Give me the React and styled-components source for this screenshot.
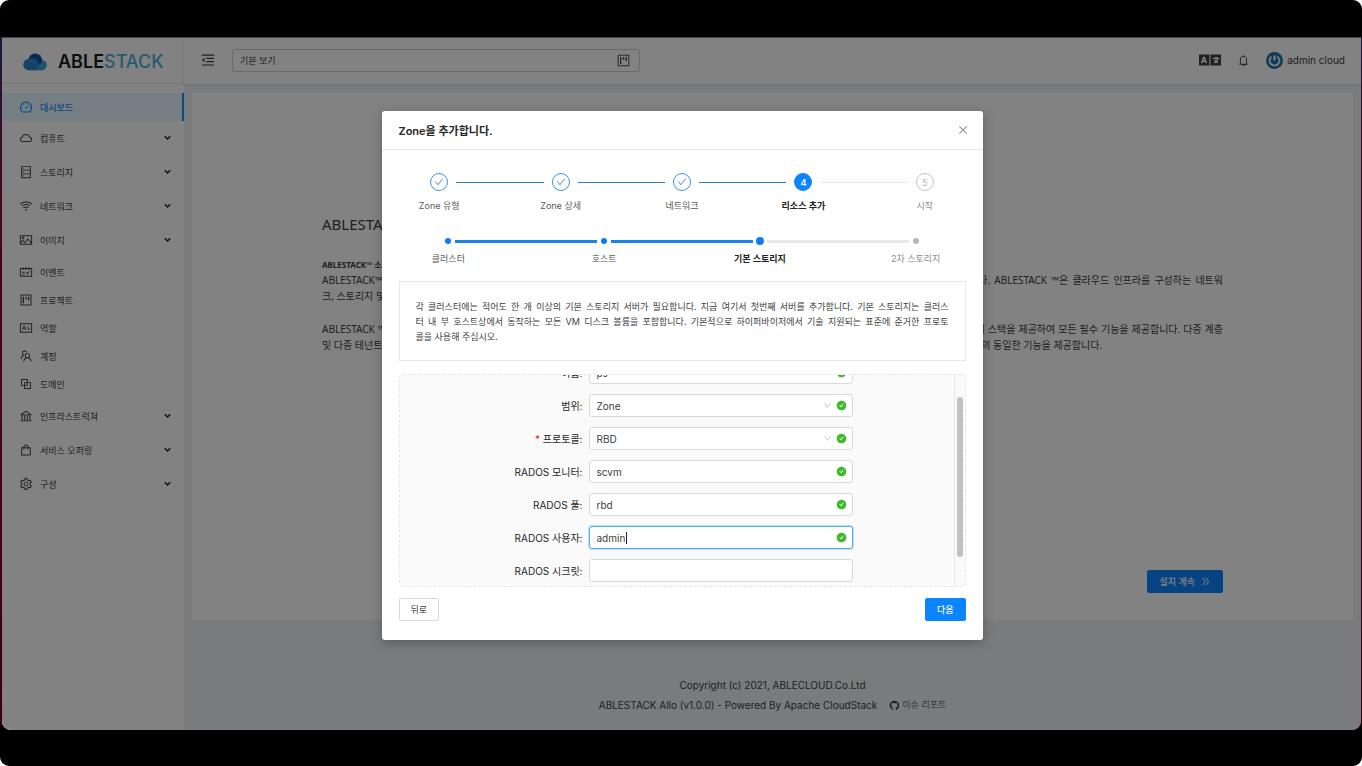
import React, { useLayoutEffect, useRef, useState } from 'react';
import styled, { createGlobalStyle, css } from 'styled-components';
import {
  AiOutlineDashboard, AiOutlineCloud, AiOutlineDatabase, AiOutlineWifi, AiOutlinePicture,
  AiOutlineSchedule, AiOutlineProject, AiOutlineIdcard, AiOutlineTeam, AiOutlineBlock,
  AiOutlineBank, AiOutlineShopping, AiOutlineSetting, AiOutlineMenuFold, AiOutlineBell,
  AiOutlineGithub, AiOutlineDoubleRight, AiFillCheckCircle, AiOutlineCheck, AiOutlineClose,
  AiOutlineDown,
} from 'react-icons/ai';
import { FaLanguage } from 'react-icons/fa';

const GlobalStyle = createGlobalStyle`
  * { box-sizing: border-box; }
  body { margin: 0; background: #fff; }
  body, button, input, select {
    font-family: Inter, "Noto Sans CJK KR", sans-serif;
    font-size: 10px;
    color: #404040;
  }
  ul, ol, p, h1, h2, h3 { margin: 0; padding: 0; list-style: none; }
  a { color: inherit; text-decoration: none; }
  svg { display: block; flex: none; }
`;

const Screen = styled.div`
  min-height: 100vh;
  display: flex;
  flex-direction: column;
  padding: 37px 0 36px;
  background: #000;
  border-radius: 9px;
`;

const Desktop = styled.div`
  flex: 1;
  display: flex;
  padding: 0 1px 0 2px;
  background: linear-gradient(#1b1740, #3a0a28 15%, #4a0018 40%, #3a0018);
  border-radius: 0 0 9px 9px;
`;

const Window = styled.div`
  position: relative;
  flex: 1;
  min-width: 0;
  display: flex;
  background: #f0f2f5;
  border-top: 1px solid #444;
  border-radius: 0 0 9px 9px;
  overflow: hidden;
`;

const Sidebar = styled.aside`
  flex: none;
  width: 182px;
  background: #fff;
`;

const Brand = styled.a`
  display: flex;
  align-items: center;
  gap: 11px;
  height: 46px;
  padding: 2px 0 0 21px;
  border-bottom: 1px solid #e4e6e9;
`;

const BrandName = styled.span`
  font-size: 18px;
  line-height: 20px;
  font-weight: 600;
  color: #1c1a1a;
`;

const BrandAccent = styled.span`
  font-weight: 500;
  color: #4ab2d8;
`;

const Menu = styled.nav`
  display: flex;
  flex-direction: column;
  gap: 1px;
  padding-top: 9px;
`;

const MenuLink = styled.a`
  display: flex;
  align-items: center;
  gap: 7px;
  height: ${(p) => (p.$parent ? 34 : 28)}px;
  padding: 0 13px 0 17px;
  font-size: 9px;
  color: #404040;
  ${(p) => p.$active && css`
    background: #e6f7ff;
    color: #1890ff;
    font-weight: 500;
    border-right: 2px solid #1890ff;
  `}
`;

const MenuText = styled.span`
  flex: 1;
`;

const Main = styled.div`
  flex: 1;
  min-width: 0;
  display: flex;
  flex-direction: column;
`;

const Header = styled.header`
  display: flex;
  align-items: center;
  height: 46px;
  padding: 0 16px 2px;
  background: #fff;
  box-shadow: 0 1px 3px rgba(0, 21, 41, 0.12);
`;

const IconButton = styled.button`
  display: flex;
  padding: 0;
  border: 0;
  background: none;
  color: ${(p) => p.$tone || '#404040'};
`;

const ViewPicker = styled.label`
  display: flex;
  align-items: center;
  width: 408px;
  height: 23px;
  margin-left: 16px;
  padding: 0 8px 0 7px;
  border: 1px solid #d0d0d0;
  border-radius: 3px;
`;

const ViewSelect = styled.select`
  flex: 1;
  appearance: none;
  padding: 0;
  border: 0;
  background: none;
  font-size: 9px;
  outline: 0;
`;

const HeaderTools = styled.div`
  display: flex;
  align-items: center;
  gap: 16px;
  margin-left: auto;
`;

const User = styled.a`
  display: flex;
  align-items: center;
  gap: 4px;
`;

const Card = styled.section`
  display: flex;
  flex-direction: column;
  min-height: calc(100vh - 239px);
  margin: 9px 8px 0;
  padding: 119px 24px 27px;
  background: #fff;
`;

const Intro = styled.div`
  flex: 1;
  display: flex;
  flex-direction: column;
  width: 100%;
  max-width: 901px;
  margin: 0 auto;
  font-family: "Noto Sans", "Noto Sans CJK KR", sans-serif;
`;

const IntroTitle = styled.h1`
  margin-bottom: 22px;
  font-size: 15px;
  line-height: 24px;
  font-weight: 400;
`;

const IntroLead = styled.h2`
  font-size: 8px;
  line-height: 14px;
  font-weight: 700;
`;

const Paragraph = styled.p`
  line-height: 16px;
  & + & { margin-top: 17px; }
`;

const Line = styled.span`
  display: block;
  white-space: nowrap;
  text-align: justify;
  text-align-last: ${(p) => (p.$last ? 'left' : 'justify')};
`;

const Button = styled.button`
  display: flex;
  align-items: center;
  justify-content: center;
  gap: 5px;
  height: 23px;
  padding: 0 11px;
  border: 1px solid ${(p) => (p.$primary ? '#0a84ff' : '#d9d9d9')};
  border-radius: 2px;
  background: ${(p) => (p.$primary ? '#0a84ff' : '#fff')};
  color: ${(p) => (p.$primary ? '#fff' : '#404040')};
  font-size: 9px;
  font-weight: ${(p) => (p.$primary ? 500 : 400)};
`;

const IntroAction = styled.div`
  display: flex;
  justify-content: flex-end;
  margin-top: auto;
`;

const Footer = styled.footer`
  display: flex;
  flex-direction: column;
  align-items: center;
  padding: 55px 0 14px;
  line-height: 20px;
`;

const FooterRow = styled.div`
  display: flex;
  align-items: center;
  gap: 12px;
`;

const IssueLink = styled.a`
  display: flex;
  align-items: center;
  gap: 2px;
  font-size: 9px;
  color: #6b6b6b;
`;

const Overlay = styled.div`
  position: absolute;
  inset: 0;
  display: flex;
  justify-content: center;
  align-items: flex-start;
  padding: 73px 0 0 1px;
  background: rgba(0, 0, 0, 0.49);
`;

const Modal = styled.section`
  width: 100%;
  max-width: 601px;
  background: #fff;
  border-radius: 3px;
  box-shadow: 0 3px 12px rgba(0, 0, 0, 0.25);
`;

const ModalHeader = styled.header`
  display: flex;
  align-items: center;
  justify-content: space-between;
  height: 39px;
  padding: 0 14px 0 17px;
  border-bottom: 1px solid #e8e8e8;
`;

const ModalTitle = styled.h2`
  font-size: 11px;
  font-weight: 600;
  color: #262626;
`;

const ModalBody = styled.div`
  padding: 23px 17px 19px;
`;

const Steps = styled.ol`
  display: flex;
  margin: 0 -20px;
`;

const SubSteps = styled(Steps)`
  margin: 24px -28px 15px;
`;

const Step = styled.li`
  flex: 1;
  display: flex;
  flex-direction: column;
  align-items: center;
`;

const StepTrack = styled.div`
  align-self: stretch;
  display: flex;
  align-items: center;
  gap: ${(p) => (p.$dots ? 3 : 8)}px;
  height: ${(p) => (p.$dots ? 8 : 18)}px;
`;

const lineColor = { done: '#2b7fd0', todo: '#e8e8e8', none: 'transparent' };
const subLineColor = { done: '#1a83e8', todo: '#e8e8e8', none: 'transparent' };

const HalfLine = styled.span`
  flex: 1;
  height: ${(p) => (p.$dots ? 3 : 1)}px;
  background: ${(p) => (p.$dots ? subLineColor : lineColor)[p.$state]};
`;

const StepCircle = styled.span`
  display: flex;
  align-items: center;
  justify-content: center;
  width: 18px;
  height: 18px;
  border: 1px solid #3d92dc;
  border-radius: 50%;
  color: #3d92dc;
  font-size: 9px;
  ${(p) => p.$state === 'current' && css`
    background: #0a84ff;
    border-color: #0a84ff;
    color: #fff;
    font-weight: 600;
  `}
  ${(p) => p.$state === 'todo' && css`
    border-color: #c4c4c4;
    color: #b8b8b8;
  `}
`;

const DotSlot = styled.span`
  display: flex;
  justify-content: center;
  width: 8px;
`;

const Dot = styled.span`
  width: ${(p) => (p.$state === 'current' ? 8 : 6)}px;
  height: ${(p) => (p.$state === 'current' ? 8 : 6)}px;
  border-radius: 50%;
  background: ${(p) => (p.$state === 'todo' ? '#b8b8b8' : '#0a7df2')};
`;

const StepLabel = styled.span`
  margin-top: ${(p) => (p.$dots ? 6 : 7)}px;
  font-size: 9px;
  line-height: 15px;
  font-weight: ${(p) => (p.$state === 'current' ? 600 : 400)};
  color: ${(p) => ({ current: '#222', done: '#595959', todo: '#8c8c8c' })[p.$state]};
`;

const Notice = styled.p`
  padding: 17px 16px 16px;
  border: 1px solid #e8e8e8;
  font-size: 9px;
  line-height: 15px;
`;

const FormPanel = styled.div`
  display: flex;
  height: 213px;
  margin: 13px 0 11px;
  border: 1px dashed #e8e8e8;
  border-radius: 4px;
  background: #fafafa;
  overflow: hidden;
`;

const FormScroller = styled.form`
  flex: 1;
  display: flex;
  flex-direction: column;
  gap: 10px;
  padding: 16px 0 46px;
  overflow-y: auto;
  scrollbar-width: none;
`;

const ScrollTrack = styled.div`
  width: 11px;
  border-left: 1px solid #e8e8e8;
  display: flex;
  justify-content: center;
`;

const ScrollThumb = styled.div`
  width: 6px;
  height: 160px;
  border-radius: 3px;
  background: #c1c1c1;
`;

const Field = styled.div`
  flex: none;
  display: grid;
  grid-template-columns: 183px 264px;
  column-gap: 6px;
  align-items: center;
`;

const FieldLabel = styled.label`
  text-align: right;
  color: #262626;
  white-space: nowrap;
`;

const Required = styled.span`
  color: #f5222d;
`;

const Control = styled.div`
  position: relative;
  display: flex;
  align-items: center;
  gap: 4px;
  height: 23px;
  padding: 0 5px 0 7px;
  border: 1px solid ${(p) => (p.$focused ? '#5aa9f5' : '#d9d9d9')};
  border-radius: 3px;
  background: #fff;
  box-shadow: ${(p) => (p.$focused ? '0 0 0 1px rgba(24, 144, 255, 0.25)' : 'none')};
`;

const controlStyle = css`
  flex: 1;
  min-width: 0;
  height: 100%;
  padding: 0;
  border: 0;
  outline: 0;
  background: none;
`;

const TextInput = styled.input`${controlStyle}`;
const SelectInput = styled.select`${controlStyle} appearance: none;`;

const Caret = styled.span`
  position: absolute;
  left: 36px;
  width: 1px;
  height: 12px;
  background: #222;
`;

const ModalFooter = styled.footer`
  display: flex;
  justify-content: space-between;
`;

const menuGroups = [
  [
    { icon: AiOutlineDashboard, text: '대시보드', active: true },
    { icon: AiOutlineCloud, text: '컴퓨트', parent: true },
    { icon: AiOutlineDatabase, text: '스토리지', parent: true },
    { icon: AiOutlineWifi, text: '네트워크', parent: true },
    { icon: AiOutlinePicture, text: '이미지', parent: true },
  ],
  [
    { icon: AiOutlineSchedule, text: '이벤트' },
    { icon: AiOutlineProject, text: '프로젝트' },
    { icon: AiOutlineIdcard, text: '역할' },
    { icon: AiOutlineTeam, text: '계정' },
    { icon: AiOutlineBlock, text: '도메인' },
  ],
  [
    { icon: AiOutlineBank, text: '인프라스트럭쳐', parent: true },
    { icon: AiOutlineShopping, text: '서비스 오퍼링', parent: true },
    { icon: AiOutlineSetting, text: '구성', parent: true },
  ],
];

const zoneSteps = [
  { label: 'Zone 유형', state: 'done' },
  { label: 'Zone 상세', state: 'done' },
  { label: '네트워크', state: 'done' },
  { label: '리소스 추가', state: 'current' },
  { label: '시작', state: 'todo' },
];

const resourceSteps = [
  { label: '클러스터', state: 'done' },
  { label: '호스트', state: 'done' },
  { label: '기본 스토리지', state: 'current' },
  { label: '2차 스토리지', state: 'todo' },
];

const fields = [
  { id: 'name', label: '이름', value: 'ps', valid: true },
  { id: 'scope', label: '범위', value: 'Zone', valid: true, select: true },
  { id: 'protocol', label: '프로토콜', value: 'RBD', valid: true, select: true, required: true },
  { id: 'monitor', label: 'RADOS 모니터', value: 'scvm', valid: true },
  { id: 'pool', label: 'RADOS 풀', value: 'rbd', valid: true },
  { id: 'user', label: 'RADOS 사용자', value: 'admin', valid: true, focused: true },
  { id: 'secret', label: 'RADOS 시크릿', value: '' },
];

const CloudLogo = () => (
  <svg width="24" height="18" viewBox="0 0 24 18">
    <circle cx="18.5" cy="12" r="5.3" fill="#35a5d8" />
    <circle cx="6" cy="11.5" r="5.6" fill="#1f78c8" />
    <rect x="5" y="9" width="14" height="8.2" fill="#2f9bd2" />
    <circle cx="12.2" cy="7.4" r="6.9" fill="#1b4fa8" />
    <path d="M6 6.200a6 6 0 0 1 6.500 11H6a5.500 5.500 0 0 1 0-11z" fill="#2a86cc" />
    <path d="M14 17.2c-.2-4 1.800-6.600 5-7.400a5 5 0 0 1-.5 7.400z" fill="#35a5d8" />
  </svg>
);

const MenuArrow = () => (
  <svg width="7" height="6" viewBox="0 0 7 6" fill="none" stroke="#222" strokeWidth="1.5">
    <path d="M.8 1.300 3.500 4l2.700-2.700" />
  </svg>
);

const Avatar = () => (
  <svg width="17" height="17" viewBox="0 0 17 17">
    <circle cx="8.500" cy="8.500" r="8.500" fill="#1f76ae" />
    <path d="M5.700 4.600a4.900 4.900 0 1 0 5.600 0" fill="none" stroke="#fff" strokeWidth="1.700" />
    <path d="M8.500 3.500v5" stroke="#fff" strokeWidth="2" />
  </svg>
);

function StepList({ items, dots, label }) {
  const List = dots ? SubSteps : Steps;
  return (
    <List aria-label={label}>
      {items.map((step, i) => {
        const before = i === 0 ? 'none' : items[i - 1].state === 'done' ? 'done' : 'todo';
        const after = i === items.length - 1 ? 'none' : step.state === 'done' ? 'done' : 'todo';
        return (
          <Step key={step.label}>
            <StepTrack $dots={dots}>
              <HalfLine $dots={dots} $state={before} />
              {dots ? (
                <DotSlot><Dot $state={step.state} /></DotSlot>
              ) : (
                <StepCircle $state={step.state}>
                  {step.state === 'done' ? <AiOutlineCheck size={10} /> : i + 1}
                </StepCircle>
              )}
              <HalfLine $dots={dots} $state={after} />
            </StepTrack>
            <StepLabel $dots={dots} $state={step.state}>{step.label}</StepLabel>
          </Step>
        );
      })}
    </List>
  );
}

function FormField({ id, label, value, valid, select, required, focused }) {
  return (
    <Field>
      <FieldLabel htmlFor={id}>
        {required && <Required>* </Required>}
        {label}:
      </FieldLabel>
      <Control $focused={focused}>
        {select ? (
          <SelectInput id={id} defaultValue={value}><option>{value}</option></SelectInput>
        ) : (
          <TextInput id={id} defaultValue={value} />
        )}
        {focused && <Caret />}
        {select && <AiOutlineDown size={9} color="#bfbfbf" />}
        {valid && <AiFillCheckCircle size={11} color="#3fb927" />}
      </Control>
    </Field>
  );
}

function StorageForm() {
  const scroller = useRef(null);
  const [offset, setOffset] = useState(0);
  useLayoutEffect(() => {
    scroller.current.scrollTop = 30;
  }, []);
  const onScroll = (e) => setOffset(e.currentTarget.scrollTop);
  return (
    <FormPanel>
      <FormScroller ref={scroller} onScroll={onScroll}>
        {fields.map((f) => <FormField key={f.id} {...f} />)}
      </FormScroller>
      <ScrollTrack>
        <ScrollThumb style={{ marginTop: Math.round(offset * 0.72) }} />
      </ScrollTrack>
    </FormPanel>
  );
}

export default function App() {
  return (
    <Screen>
      <GlobalStyle />
      <Desktop>
        <Window>
          <Sidebar>
            <Brand href="#">
              <CloudLogo />
              <BrandName>ABLE<BrandAccent>STACK</BrandAccent></BrandName>
            </Brand>
            <Menu>
              {menuGroups.map((group) => (
                <ul key={group[0].text}>
                  {group.map(({ icon: Icon, text, parent, active }) => (
                    <li key={text}>
                      <MenuLink href="#" $parent={parent} $active={active}>
                        <Icon size={14} />
                        <MenuText>{text}</MenuText>
                        {parent && <MenuArrow />}
                      </MenuLink>
                    </li>
                  ))}
                </ul>
              ))}
            </Menu>
          </Sidebar>
          <Main>
            <Header>
              <IconButton aria-label="메뉴 접기"><AiOutlineMenuFold size={16} /></IconButton>
              <ViewPicker>
                <ViewSelect aria-label="보기"><option>기본 보기</option></ViewSelect>
                <AiOutlineProject size={15} color="#555" />
              </ViewPicker>
              <HeaderTools>
                <IconButton aria-label="언어"><FaLanguage size={22} /></IconButton>
                <IconButton aria-label="알림"><AiOutlineBell size={13} /></IconButton>
                <User href="#"><Avatar />admin cloud</User>
              </HeaderTools>
            </Header>
            <Card>
              <Intro>
                <IntroTitle>ABLESTACK</IntroTitle>
                <IntroLead>ABLESTACK™ 소개</IntroLead>
                <Paragraph>
                  <Line>ABLESTACK™은 클라우드 인프라를 쉽고 손쉽게 구축하고 운영할 수 있도록 컴퓨트와 네트워크 및 스토리지를 하나로 통합한 차세대 클라우드 플랫폼입니다. ABLESTACK ™은 클라우드 인프라를 구성하는 네트워</Line>
                  <Line $last>크, 스토리지 및 컴퓨팅 노드를 관리합니다.</Line>
                </Paragraph>
                <Paragraph>
                  <Line>ABLESTACK ™은 서비스 공급자와 여러 기업이 클라우드 서비스를 안정적이고 유연하게 제공할 수 있도록 가상화와 자동화 및 통합 관리 기능을 갖춘 소프트웨어 스택을 제공하여 모든 필수 기능을 제공합니다. 다중 계층</Line>
                  <Line $last>및 다중 테넌트 환경의 애플리케이션들을 안정적으로 운영할 수 있도록 위하여 공용 클라우드와 사설 클라우드를 함께 지원하며 모든 규모의 사용자에게 같은 수준의 동일한 기능을 제공합니다.</Line>
                </Paragraph>
                <IntroAction>
                  <Button $primary>설치 계속 <AiOutlineDoubleRight size={11} /></Button>
                </IntroAction>
              </Intro>
            </Card>
            <Footer>
              <div>Copyright (c) 2021, ABLECLOUD.Co.Ltd</div>
              <FooterRow>
                ABLESTACK Allo (v1.0.0) - Powered By Apache CloudStack
                <IssueLink href="#"><AiOutlineGithub size={11} color="#404040" />이슈 리포트</IssueLink>
              </FooterRow>
            </Footer>
          </Main>
          <Overlay>
            <Modal role="dialog" aria-labelledby="dialog-title">
              <ModalHeader>
                <ModalTitle id="dialog-title">Zone을 추가합니다.</ModalTitle>
                <IconButton aria-label="닫기" $tone="#8c8c8c"><AiOutlineClose size={12} /></IconButton>
              </ModalHeader>
              <ModalBody>
                <StepList items={zoneSteps} label="Zone" />
                <StepList items={resourceSteps} label="리소스" dots />
                <Notice>
                  <Line>각 클러스터에는 적어도 한 개 이상의 기본 스토리지 서버가 필요합니다. 지금 여기서 첫번째 서버를 추가합니다. 기본 스토리지는 클러스</Line>
                  <Line>터 내 부 호스트상에서 동작하는 모든 VM 디스크 볼륨을 포함합니다. 기본적으로 하이퍼바이저에서 기술 지원되는 표준에 준거한 프로토</Line>
                  <Line $last>콜을 사용해 주십시오.</Line>
                </Notice>
                <StorageForm />
                <ModalFooter>
                  <Button>뒤로</Button>
                  <Button $primary>다음</Button>
                </ModalFooter>
              </ModalBody>
            </Modal>
          </Overlay>
        </Window>
      </Desktop>
    </Screen>
  );
}
